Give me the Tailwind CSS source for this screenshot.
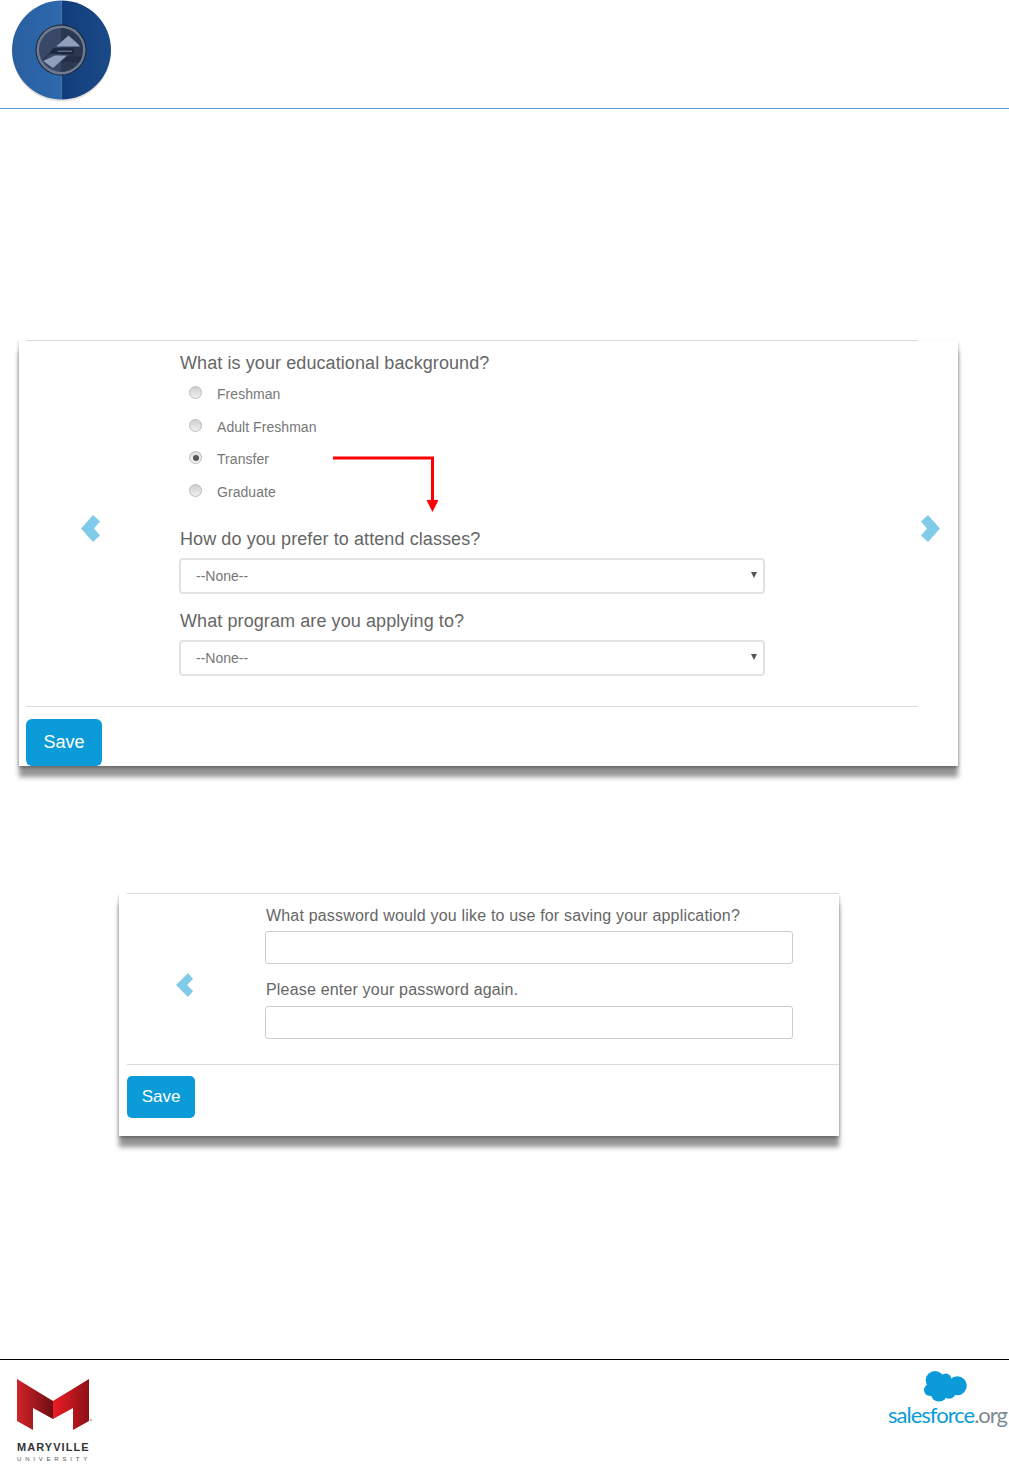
<!DOCTYPE html>
<html>
<head>
<meta charset="utf-8">
<title>Application steps</title>
<script src="https://cdn.jsdelivr.net/npm/@tailwindcss/browser@4"></script>
</head>
<body class="bg-white font-['Liberation_Sans',Arial,sans-serif] text-[#666]">
<div class="w-[1009px] h-[1468px] overflow-hidden flex flex-col">

  <!-- header -->
  <header class="h-[109px] border-b border-[#5b9bd5] pl-[12px] shrink-0">
    <svg width="100" height="104" viewBox="0 0 100 104">
      <defs>
        <linearGradient id="lh" x1="0" y1="0" x2="1" y2="0"><stop offset="0" stop-color="#2a5f9f"/><stop offset="1" stop-color="#2c69ae"/></linearGradient>
        <linearGradient id="rh" x1="0" y1="0" x2="1" y2="0"><stop offset="0" stop-color="#123d7c"/><stop offset="1" stop-color="#1a4a87"/></linearGradient>
        <clipPath id="disc"><circle cx="49" cy="50" r="22"/></clipPath>
      </defs>
      <circle cx="49.5" cy="52.5" r="49" fill="#e6e0de"/>
      <path d="M49.5 0.5a49.5 49.5 0 0 0 0 99z" fill="url(#lh)"/>
      <path d="M49.5 0.5a49.5 49.5 0 0 1 0 99z" fill="url(#rh)"/>
      <circle cx="49" cy="50" r="25.5" fill="#20232b"/>
      <circle cx="49" cy="50" r="24.500" fill="#6d7b94"/>
      <circle cx="49" cy="50" r="22" fill="#3a4868"/>
      <path d="M49 28a22 22 0 0 1 0 44z" fill="#2c3850"/>
      <g clip-path="url(#disc)">
        <path d="M31 60 56 36" stroke="#1d2740" fill="none"/>
        <path d="M44 46.500 56.500 35.500 66 44 68 46.500z" fill="#8f9fbc"/>
        <path d="M31.300 61 43 55.500H55L41 68z" fill="#8f9fbc"/>
        <path d="M41 48.300H62V54H37z" fill="#1d2740"/>
        <path d="M46 50.500H60V52H45z" fill="#5d6b84"/>
        <path d="M56 56.500H72V62H50z" fill="#232e47"/>
      </g>
    </svg>
  </header>

  <main class="flex-1">
    <!-- first step -->
    <section class="relative w-[939px] ml-[19px] mt-[231px] bg-white shadow-[0_11px_5px_rgba(0,0,0,0.42),0_2px_3px_rgba(0,0,0,0.3)]">
      <div class="h-px ml-[7px] mr-[40px] bg-[#dcdcdc]"></div>
      <div class="flex items-center">
        <div class="w-[161px] pl-[61px] pt-[11px] shrink-0">
          <svg width="22" height="30" viewBox="0 0 22 30"><path d="M13 1 20 7.500 14 14.500 20 21.500 13 28 1 14.500z" fill="#7fcbe9"/></svg>
        </div>
        <form class="w-[585px] h-[365px] pt-[10px] shrink-0">
          <p class="text-[18px] leading-[24px] tracking-[0.09px] whitespace-nowrap">What is your educational background?</p>
          <div class="mt-[3.500px] text-[14px] tracking-[0.05px] text-[#777]">
            <label class="flex items-center h-[32.5px] pl-[9px] gap-[15px]"><span class="w-[13px] h-[13px] rounded-full border border-[#bbb] bg-gradient-to-b from-[#cfcfcf] to-[#f0f0f0] -translate-y-[2px]"></span>Freshman</label>
            <label class="flex items-center h-[32.5px] pl-[9px] gap-[15px]"><span class="w-[13px] h-[13px] rounded-full border border-[#bbb] bg-gradient-to-b from-[#cfcfcf] to-[#f0f0f0] -translate-y-[2px]"></span>Adult Freshman</label>
            <label class="flex items-center h-[32.5px] pl-[9px] gap-[15px]"><span class="flex items-center justify-center w-[13px] h-[13px] rounded-full border border-[#bbb] bg-gradient-to-b from-[#dcdcdc] to-[#f4f4f4] -translate-y-[2px]"><span class="w-[6px] h-[6px] rounded-full bg-[#555]"></span></span>Transfer</label>
            <label class="flex items-center h-[32.5px] pl-[9px] gap-[15px]"><span class="w-[13px] h-[13px] rounded-full border border-[#bbb] bg-gradient-to-b from-[#cfcfcf] to-[#f0f0f0] -translate-y-[2px]"></span>Graduate</label>
          </div>
          <p class="mt-[18.500px] text-[18px] leading-[24px] tracking-[0.09px] whitespace-nowrap">How do you prefer to attend classes?</p>
          <div class="relative mt-[7px] -ml-px h-[36px] border-2 border-[#e2e2e2] rounded-[4px] flex items-center pl-[15px] text-[14px] text-[#777]">
            --None--
            <span class="absolute right-[6px] top-[12px] w-0 h-0 border-x-[3.500px] border-x-transparent border-t-[6px] border-t-[#555]"></span>
          </div>
          <p class="mt-[15px] text-[18px] leading-[24px] tracking-[0.09px] whitespace-nowrap">What program are you applying to?</p>
          <div class="relative mt-[7px] -ml-px h-[36px] border-2 border-[#e2e2e2] rounded-[4px] flex items-center pl-[15px] text-[14px] text-[#777]">
            --None--
            <span class="absolute right-[6px] top-[12px] w-0 h-0 border-x-[3.500px] border-x-transparent border-t-[6px] border-t-[#555]"></span>
          </div>
        </form>
        <div class="ml-auto mr-[17px] pt-[11px]">
          <svg width="22" height="30" viewBox="0 0 22 30"><path d="M9 1 2 7.500 8 14.500 2 21.500 9 28 21 14.500z" fill="#7fcbe9"/></svg>
        </div>
      </div>
      <div class="h-px ml-[7px] mr-[40px] bg-[#dcdcdc]"></div>
      <div class="pl-[7px] pt-[12px]">
        <button class="block w-[76px] h-[47px] rounded-[6px] bg-[#0b9bd8] text-white text-[18px]">Save</button>
      </div>
      <!-- red arrow annotation -->
      <svg class="absolute left-[314px] top-[116px]" width="108" height="58" viewBox="0 0 108 58">
        <path d="M0 2H99.500V46" fill="none" stroke="#f00" stroke-width="3"/>
        <path d="M93.500 44H105.500L99.500 56z" fill="#f00"/>
      </svg>
    </section>

    <!-- second step -->
    <section class="w-[720px] ml-[119px] mt-[127px] bg-white shadow-[0_11px_5px_rgba(0,0,0,0.42),0_2px_3px_rgba(0,0,0,0.3)]">
      <div class="h-px ml-[8px] bg-[#dcdcdc]"></div>
      <div class="flex items-center h-[170px]">
        <div class="w-[146px] pl-[56px] pt-[11px] shrink-0">
          <svg width="20" height="26" viewBox="0 0 20 26"><path d="M13 1 18 7 12 13 18 19 13 25 1 13z" fill="#7fcbe9"/></svg>
        </div>
        <form class="w-[528px] h-full pt-[12px] shrink-0">
          <p class="text-[16px] leading-[20px] tracking-[0.18px] pl-px whitespace-nowrap">What password would you like to use for saving your application?</p>
          <input type="password" class="block mt-[5px] w-full h-[33px] border border-[#ccc] rounded-[3px]">
          <p class="mt-[16px] text-[16px] leading-[20px] tracking-[0.18px] pl-px whitespace-nowrap">Please enter your password again.</p>
          <input type="password" class="block mt-[6px] w-full h-[33px] border border-[#ccc] rounded-[3px]">
        </form>
      </div>
      <div class="h-px ml-[8px] bg-[#dcdcdc]"></div>
      <div class="pl-[8px] pt-[11px] pb-[18px]">
        <button class="block w-[68px] h-[42px] rounded-[5px] bg-[#0b9bd8] text-white text-[17px]">Save</button>
      </div>
    </section>
  </main>

  <!-- footer logos -->
  <footer class="h-[109px] border-t border-black flex justify-between items-start pl-[17px] pr-[2px] shrink-0">
    <div class="relative pt-[19px] w-[76px]">
      <svg class="block" width="76" height="52" viewBox="0 0 76 52">
        <defs>
          <linearGradient id="ml" x1="0" y1="0" x2="1" y2="0"><stop offset="0" stop-color="#d2232a"/><stop offset="1" stop-color="#6e0d12"/></linearGradient>
          <linearGradient id="mr" x1="0" y1="0" x2="1" y2="0"><stop offset="0" stop-color="#ee1c25"/><stop offset="1" stop-color="#8c1116"/></linearGradient>
        </defs>
        <path d="M0 0 36 22V40L16 29V51L0 42z" fill="url(#ml)"/>
        <path d="M72 0 36 22V40L56 29V51L72 42z" fill="url(#mr)"/>
        <circle cx="74" cy="41" r="1.200" fill="#bbb"/>
      </svg>
      <p class="mt-[10px] text-[11px] leading-[12px] font-bold tracking-[1.05px] text-[#333] whitespace-nowrap">MARYVILLE</p>
      <p class="mt-[2px] text-[6px] leading-[8px] tracking-[3.8px] text-[#555] whitespace-nowrap">UNIVERSITY</p>
    </div>
    <div class="flex flex-col items-start pt-[11px]">
      <svg class="block ml-[36px]" width="44" height="32" viewBox="0 0 44 32">
        <g fill="#0b9bd8">
          <circle cx="11" cy="9.300" r="9.300"/><circle cx="21.700" cy="8" r="5.500"/><circle cx="33.300" cy="14.700" r="9.500"/><circle cx="6" cy="19" r="6"/><circle cx="15" cy="22.300" r="8.300"/><circle cx="25" cy="20.700" r="7"/><circle cx="20" cy="14" r="8"/>
        </g>
      </svg>
      <p class="mt-[-1px] font-['Lato',sans-serif] text-[22px] leading-[26px] tracking-[-1px] text-[#0b9bd8] whitespace-nowrap">salesforce<span class="text-[#7b8a93]">.org</span></p>
    </div>
  </footer>
</div>
</body>
</html>
